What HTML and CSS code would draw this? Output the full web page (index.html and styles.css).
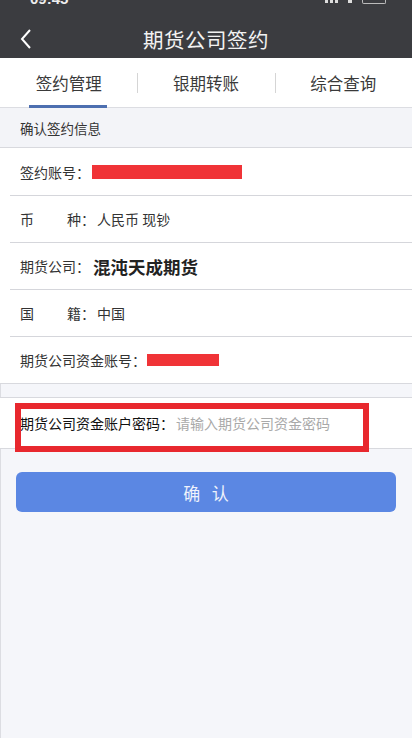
FILE: index.html
```html
<!DOCTYPE html>
<html lang="zh-CN">
<head>
<meta charset="utf-8">
<title>期货公司签约</title>
<link rel="stylesheet" href="styles.css">
</head>
<body>
<header class="topbar">
  <div class="status">
    <span class="time">09:45</span>
    <span class="status-right">
      <span class="signal"><i></i><i></i><i></i></span>
      <span class="wifi"></span>
      <span class="battery"></span>
    </span>
  </div>
  <div class="titlebar">
    <svg class="back" width="14" height="22" viewBox="0 0 14 22"><path d="M11 2 L3 11 L11 20" fill="none" stroke="#fff" stroke-width="2"/></svg>
    <h1 class="title">期货公司签约</h1>
  </div>
</header>
<nav class="tabs">
  <div class="tab active">签约管理</div>
  <div class="tab">银期转账</div>
  <div class="tab">综合查询</div>
</nav>
<main class="content">
  <div class="section-head">确认签约信息</div>
  <div class="rows">
    <div class="row"><span class="label">签约账号：</span><span class="redact redact-long"></span></div>
    <div class="row"><span class="label label-wide"><span>币</span><span>种：</span></span><span class="value">人民币 现钞</span></div>
    <div class="row"><span class="label">期货公司：</span><span class="value value-big">混沌天成期货</span></div>
    <div class="row"><span class="label label-wide"><span>国</span><span>籍：</span></span><span class="value">中国</span></div>
    <div class="row"><span class="label">期货公司资金账号：</span><span class="redact redact-short"></span></div>
  </div>
  <div class="pwd-row">
    <span class="pwd-label">期货公司资金账户密码：</span>
    <span class="placeholder">请输入期货公司资金密码</span>
    <span class="mark"></span>
  </div>
  <button class="confirm">确&nbsp;&nbsp;&nbsp;认</button>
</main>
</body>
</html>
```
FILE: styles.css
```css
* { box-sizing: border-box; }
html, body { margin: 0; padding: 0; }
body {
  width: 412px;
  height: 738px;
  display: flex;
  flex-direction: column;
  background: #f5f6fa;
  font-family: "Noto Sans CJK SC", "Noto Sans", sans-serif;
  color: #333;
  overflow: hidden;
}
.topbar { background: #3b3c40; color: #fff; }
.status {
  height: 20px;
  display: flex;
  justify-content: space-between;
  align-items: flex-start;
  padding: 0 26px 0 30px;
  overflow: hidden;
}
.time {
  font-family: "Liberation Sans", sans-serif;
  font-weight: bold;
  font-size: 15px;
  line-height: 15px;
  margin-top: -9px;
  color: #eee;
}
.status-right { display: flex; align-items: flex-start; gap: 10px; }
.signal { display: flex; gap: 2px; }
.signal i { display: block; width: 3px; height: 3px; background: #ddd; }
.wifi { width: 4px; height: 3px; background: #ddd; }
.battery { width: 24px; height: 4px; border: 1px solid #bbb; border-top: none; border-radius: 0 0 2px 2px; }
.titlebar {
  height: 38px;
  display: flex;
  align-items: center;
  justify-content: center;
  position: relative;
}
.back { position: absolute; left: 19px; top: 8px; }
.title {
  margin: 0;
  font-size: 20.5px;
  font-weight: normal;
  color: #f2f2f2;
  letter-spacing: 0.5px;
}
.tabs {
  display: grid;
  grid-template-columns: repeat(3, 1fr);
  height: 50px;
  background: #fff;
  border-bottom: 1px solid #dcdde2;
  align-items: center;
}
.tab {
  position: relative;
  height: 100%;
  display: flex;
  align-items: center;
  justify-content: center;
  font-size: 16.5px;
  color: #3a3a3a;
}
.tab + .tab::before {
  content: "";
  position: absolute;
  left: 0;
  top: 15px;
  width: 1px;
  height: 20px;
  background: #d5d5d5;
}
.tab.active::after {
  content: "";
  position: absolute;
  left: 29px;
  width: 78px;
  bottom: -1px;
  height: 3px;
  background: #4d6fb0;
}
.content { flex: 1; box-shadow: inset 1px 0 0 #dcdde2; }
.section-head {
  height: 40px;
  display: flex;
  align-items: center;
  padding-left: 20px;
  font-size: 13.5px;
  color: #333;
  background: #f3f4f8;
  border-bottom: 1px solid #d8d9de;
}
.rows { background: #fff; border-bottom: 1px solid #d8d9de; }
.row {
  height: 47px;
  display: flex;
  align-items: center;
  padding-left: 20px;
  font-size: 14px;
  position: relative;
}
.row + .row { border-top: 1px solid #d5d6db; margin-left: 10px; padding-left: 10px; }
.label { color: #333; white-space: nowrap; }
.label-wide { display: inline-flex; justify-content: space-between; width: 75px; }
.value { margin-left: 2px; color: #333; font-size: 14px; }
.value-big { font-size: 17.5px; font-weight: bold; color: #222; margin-left: 3px; }
.redact { display: inline-block; height: 14px; background: #f03337; }
.redact-long { width: 150px; margin-left: 2px; }
.redact-short { width: 72px; height: 12px; margin-left: 1px; }
.pwd-row {
  position: relative;
  margin-top: 13px;
  height: 52px;
  background: #fff;
  border-top: 1px solid #d8d9de;
  border-bottom: 1px solid #d8d9de;
  display: flex;
  align-items: center;
  padding-left: 20px;
  font-size: 14px;
}
.pwd-label { color: #111; }
.placeholder { color: #a9a9a9; margin-left: 2px; }
.mark {
  position: absolute;
  left: 15px;
  top: 5px;
  width: 354px;
  height: 49px;
  border: 6px solid #e8282e;
}
.confirm {
  display: block;
  margin: 23px 16px 0;
  width: 380px;
  height: 40px;
  border: none;
  border-radius: 6px;
  background: #5b87e3;
  color: #eef2fb;
  font-family: "Noto Sans CJK SC", sans-serif;
  font-size: 17px;
  padding: 0;
}
```
